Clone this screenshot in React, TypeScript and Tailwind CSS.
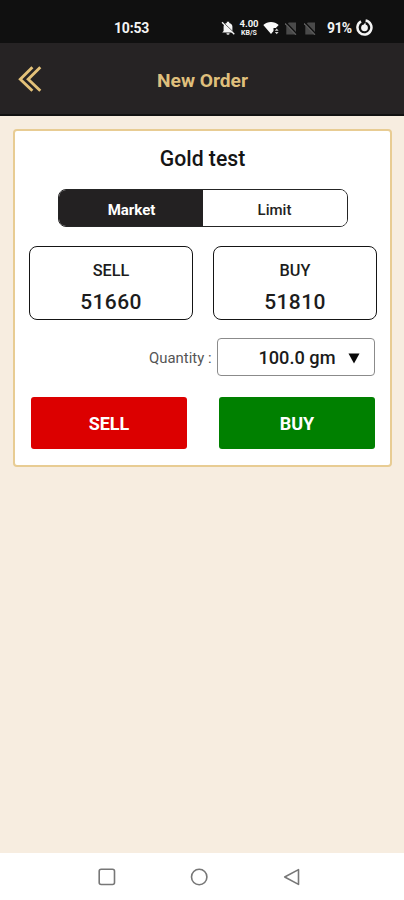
import type { ReactNode } from "react";

function BellOff() {
  return (
    <svg width="14" height="14" viewBox="0 0 14 14" fill="none">
      <path d="M2.600 10V5.500C2.600 3.700 4 2.300 5.800 2V0.700h2.400v1.300C10 2.300 11.400 3.700 11.400 5.500V10l1.400 1.500H1.200z" fill="#f4f4f4" />
      <path d="M5.400 12.200h3.200a1.600 1.600 0 0 1-3.200 0z" fill="#f4f4f4" />
      <path d="M1.800 0.900 13.600 12.300" stroke="#101010" strokeWidth="0.900" />
      <path d="M1 1.300 13.300 13.300" stroke="#f4f4f4" strokeWidth="1.300" />
    </svg>
  );
}

function Wifi() {
  return (
    <svg width="17" height="14" viewBox="0 0 17 14" fill="#fafafa">
      <path d="M0.300 4C4.500-0.100 11.500-0.100 15.700 4L12.800 7H10.500v3L8 13z" />
      <path d="M13.700 7.500 15.600 9.800h-3.800zM13.700 13.300 11.800 11h3.800z" fill="#d0d0d0" />
    </svg>
  );
}

function NoSim() {
  return (
    <svg width="12" height="13" viewBox="0 0 12 13" fill="none">
      <path d="M3.800 0.500H11V12.500H1.300V3z" fill="#4a4a4a" />
      <path d="M0.800 0.300 12 12" stroke="#111" strokeWidth="1.500" />
      <path d="M0 1.300 11 12.800" stroke="#5c5c5c" strokeWidth="1.200" />
    </svg>
  );
}

function Battery() {
  return (
    <svg width="17" height="17" viewBox="0 0 17 17" fill="none">
      <path d="M9.600 1.600A7 7 0 1 1 5 2.400" stroke="#f5f5f5" strokeWidth="2.500" />
      <circle cx="8.500" cy="8.800" r="3.400" fill="#f5f5f5" />
      <path d="M9.300 3.200 6.200 8.500h4z" fill="#f5f5f5" />
    </svg>
  );
}

function StatusBar() {
  return (
    <div className="flex h-[43px] items-start bg-[#101010] pt-[19px] text-[#f4f4f4]">
      <span className="ml-[114px] w-[36px] text-[14px] leading-[18px] font-bold tracking-[-0.200px]">10:53</span>
      <div className="ml-[71px] mt-[2px]"><BellOff /></div>
      <div className="-mt-px ml-[4px] flex w-[20px] flex-col items-center font-bold">
        <span className="text-[9.500px] leading-[11px]">4.00</span>
        <span className="text-[7px] leading-[8px]">KB/S</span>
      </div>
      <div className="ml-[4px] mt-[2px]"><Wifi /></div>
      <div className="ml-[5px] mt-[3px]"><NoSim /></div>
      <div className="ml-[7px] mt-[3px]"><NoSim /></div>
      <span className="ml-[11px] w-[27px] text-[14px] leading-[18px] font-bold tracking-[-0.600px]">91%</span>
      <div className="ml-[2px]"><Battery /></div>
    </div>
  );
}

function Header() {
  return (
    <header className="grid h-[73px] grid-cols-[60px_1fr_60px] items-center border-b-2 border-[#111] bg-[#262324]">
      <svg className="ml-[18px]" width="24" height="28" viewBox="0 0 24 28" fill="none" stroke="#e3c179" strokeWidth="2.900">
        <path d="M14.400 2.300 2.300 14.200 14.400 25.800M22.300 2.300 10.200 14.200 22.300 25.800" />
      </svg>
      <h1 className="pt-[5px] pl-px text-center text-[19.200px] leading-6 font-bold text-[#dfbf7c]">New Order</h1>
    </header>
  );
}

function PriceBox({ label, price }: { label: string; price: string }) {
  return (
    <div className="flex h-[74px] w-[164px] flex-col items-center rounded-[8px] border-[1.500px] border-[#151515] pt-[13px] text-[#1c1c1c]">
      <span className="pl-px text-[16.300px] leading-[22px] font-medium">{label}</span>
      <span className="mt-[8px] pl-px text-[21px] leading-[24px] font-medium tracking-[0.400px]">{price}</span>
    </div>
  );
}

function ActionButton({ className, children }: { className: string; children: ReactNode }) {
  return (
    <button className={`h-[52px] w-[156px] rounded-[3px] pl-px text-[18px] font-bold text-white ${className}`}>{children}</button>
  );
}

function OrderCard() {
  return (
    <section className="mx-auto mt-[13px] flex h-[338px] w-[379px] flex-col rounded-[4px] border-2 border-[#e8cc93] bg-white">
      <h2 className="mt-[15px] pl-px text-center text-[21.200px] leading-[26px] font-medium text-[#151515]">Gold test</h2>
      <div className="mt-[17px] ml-[43px] flex h-[38px] w-[290px] overflow-hidden rounded-[8px] border border-[#252525] text-[15px] font-medium">
        <button className="w-[144px] bg-[#232122] pt-[4px] pl-[2px] font-bold text-white">Market</button>
        <button className="flex-1 bg-white pt-[4px] text-[#222]">Limit</button>
      </div>
      <div className="mt-[19px] flex justify-between pr-[13px] pl-[14px]">
        <PriceBox label="SELL" price="51660" />
        <PriceBox label="BUY" price="51810" />
      </div>
      <div className="mt-[18px] flex items-center justify-end pr-[15px]">
        <label className="mr-[5px] pt-[2px] text-[14.900px] text-[#555]">Quantity :</label>
        <button className="flex h-[38px] w-[158px] items-center justify-end rounded-[4px] border border-[#8b8b8b] pt-[2px] pr-[14px] text-[18.200px] font-medium text-[#1b1b1b]">
          <span>100.0 gm</span>
          <svg className="ml-[12px]" width="12" height="11" viewBox="0 0 12 11"><path d="M0.500 0.500h11L6 10.500z" fill="#080808" /></svg>
        </button>
      </div>
      <div className="mt-[21px] flex justify-between pr-[15px] pl-[16px]">
        <ActionButton className="bg-[#dc0000]">SELL</ActionButton>
        <ActionButton className="bg-[#008000]">BUY</ActionButton>
      </div>
    </section>
  );
}

function NavigationBar() {
  return (
    <nav className="flex h-[47px] items-center bg-white">
      <svg className="ml-[98px]" width="18" height="18" viewBox="0 0 18 18" fill="none" stroke="#777" strokeWidth="1.600">
        <rect x="1.200" y="1.200" width="15.300" height="15.300" rx="2" />
      </svg>
      <svg className="ml-[74px]" width="18" height="18" viewBox="0 0 18 18" fill="none" stroke="#777" strokeWidth="1.600">
        <circle cx="9.200" cy="9" r="7.700" />
      </svg>
      <svg className="ml-[75px]" width="18" height="18" viewBox="0 0 18 18" fill="none" stroke="#777" strokeWidth="1.600" strokeLinejoin="round">
        <path d="M1.700 9 15.500 1.600V16.400z" />
      </svg>
    </nav>
  );
}

export default function App() {
  return (
    <div className="flex h-[900px] w-[404px] flex-col bg-[#f7ede0] font-['Roboto',sans-serif]">
      <StatusBar />
      <Header />
      <main className="flex-1"><OrderCard /></main>
      <NavigationBar />
    </div>
  );
}
